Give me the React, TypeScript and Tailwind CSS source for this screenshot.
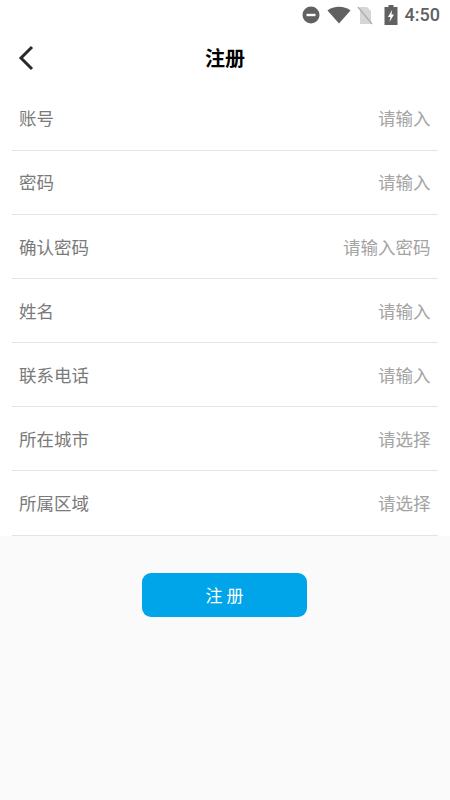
import React from 'react';

const rows = [
  { label: '账号', hint: '请输入' },
  { label: '密码', hint: '请输入' },
  { label: '确认密码', hint: '请输入密码' },
  { label: '姓名', hint: '请输入' },
  { label: '联系电话', hint: '请输入' },
  { label: '所在城市', hint: '请选择' },
  { label: '所属区域', hint: '请选择' },
];

const StatusBar = () => (
  <div className="h-[30px] flex items-center justify-end pr-[10px] text-[#616161]">
    <svg width="18" height="18" viewBox="0 0 18 18" className="mr-[7px]">
      <circle cx="9" cy="9" r="8.5" fill="#616161" />
      <rect x="4.5" y="7.8" width="9" height="2.4" fill="#fff" />
    </svg>
    <svg width="24" height="18" viewBox="0 0 24 18" className="mr-[6px]">
      <path d="M0.5 4.5C3.5 2 7.8 0.8 12 0.8s8.500 1.200 11.500 3.700L12 17.500z" fill="#616161" />
    </svg>
    <svg width="16" height="20" viewBox="0 0 16 20" className="mr-[11px]">
      <path d="M3 2h7l4 4v13H3z" fill="#d6d6d6" />
      <path d="M1 2L15 19" stroke="#b0b0b0" strokeWidth="1.5" />
    </svg>
    <svg width="14" height="22" viewBox="0 0 14 22" className="mr-[7px]">
      <path d="M4.500 1h5v2H13.500v18H0.500V3h4z" fill="#616161" />
      <path d="M8 6L4 13h2.500L5.500 18 10 10.500H7.500z" fill="#fff" />
    </svg>
    <span className="text-[18px] leading-none font-medium font-['Roboto',sans-serif]">4:50</span>
  </div>
);

export default function App() {
  return (
    <div className="w-[450px] h-[800px] flex flex-col bg-white font-['Noto_Sans_CJK_SC','Noto_Sans',sans-serif]">
      <StatusBar />
      <div className="h-[56px] relative flex items-center justify-center">
        <svg width="18" height="26" viewBox="0 0 18 26" className="absolute left-[17px] top-[15px]">
          <path d="M15 2L4 13l11 11" fill="none" stroke="#2a2a2a" strokeWidth="3" />
        </svg>
        <span className="text-[20px] font-bold text-black leading-none">注册</span>
      </div>
      <div className="px-3 mt-[1px]">
        {rows.map((r) => (
          <div key={r.label} className="h-[64.08px] flex items-center justify-between pl-[7px] pr-[7.5px] border-b border-[#e4e4e4]">
            <span className="text-[17.5px] text-[#7a7a7a]">{r.label}</span>
            <span className="text-[17.5px] text-[#a3a3a3]">{r.hint}</span>
          </div>
        ))}
      </div>
      <div className="flex-1 bg-[#fafafa] flex justify-center pt-[37px] pr-[2px]">
        <button className="w-[165px] h-[44px] rounded-[9px] bg-[#00a5e9] text-white text-[17px] tracking-[4px] pl-[5px]">注册</button>
      </div>
    </div>
  );
}
